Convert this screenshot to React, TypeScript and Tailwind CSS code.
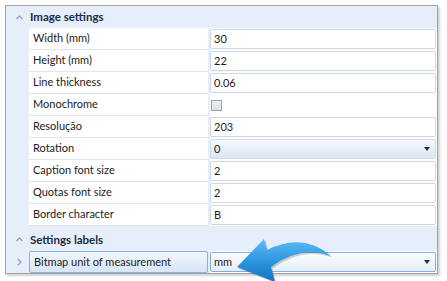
import React from "react";

interface Row {
  label: string;
  value?: string;
  kind?: "text" | "check" | "combo";
}

const rows: Row[] = [
  { label: "Width (mm)", value: "30" },
  { label: "Height (mm)", value: "22" },
  { label: "Line thickness", value: "0.06" },
  { label: "Monochrome", kind: "check" },
  { label: "Resolução", value: "203" },
  { label: "Rotation", value: "0", kind: "combo" },
  { label: "Caption font size", value: "2" },
  { label: "Quotas font size", value: "2" },
  { label: "Border character", value: "B" },
];

function ChevronUp() {
  return (
    <svg width="7" height="5" viewBox="0 0 7 5" className="block">
      <path d="M0.5 4 L3.5 1 L6.5 4" fill="none" stroke="#8d9db3" strokeWidth="1.2" />
    </svg>
  );
}

function DropTriangle() {
  return (
    <svg width="6" height="4" viewBox="0 0 6 4" className="block">
      <path d="M0 0 H6 L3 4 Z" fill="#1f2f4a" />
    </svg>
  );
}

function SectionHeader({ title, tall }: { title: string; tall?: boolean }) {
  return (
    <div
      className={`flex items-center bg-[#e6eefa] ${tall ? "h-[25px] pt-[2px]" : "h-[22px]"}`}
    >
      <div className="w-[23px] flex justify-center pl-[3px]">
        <ChevronUp />
      </div>
      <span className="font-bold text-[#1d2b44] text-[11.5px] pl-[1px]">{title}</span>
    </div>
  );
}

function ValueBox({ row, selected }: { row: Row; selected?: boolean }) {
  if (row.kind === "check") {
    return (
      <div className="h-full flex items-center pl-[1px]">
        <div className="w-[11px] h-[11px] border border-[#9aa3ad] bg-gradient-to-b from-[#eef0f2] to-[#dfe3e8]" />
      </div>
    );
  }
  if (row.kind === "combo") {
    return (
      <div
        className={`h-full rounded-[2px] border flex items-center justify-between pl-[3px] pr-[5px] bg-gradient-to-b ${
          selected
            ? "border-[#7eaee8] from-[#fbfdff] to-[#e4edf8]"
            : "border-[#cfdbe9] from-[#f4f8fd] to-[#dbe6f3]"
        }`}
      >
        <span>{row.value}</span>
        <DropTriangle />
      </div>
    );
  }
  return (
    <div className="h-full rounded-[2px] border border-[#cdd8e6] bg-white flex items-center pl-[3px]">
      {row.value}
    </div>
  );
}

function PropertyRow({ row, selected }: { row: Row; selected?: boolean }) {
  return (
    <div className="flex h-[22px]">
      <div className="w-[23px] bg-[#e6eefa] flex items-center justify-center pl-[3px]">
        {selected && (
          <svg width="5" height="8" viewBox="0 0 5 8" className="block">
            <path d="M0.8 0.8 L4 4 L0.8 7.2" fill="none" stroke="#8d9db3" strokeWidth="1.2" />
          </svg>
        )}
      </div>
      <div
        className={`w-[179px] flex items-center pl-[4px] ${
          selected
            ? "border border-[#86b0e2] bg-gradient-to-b from-[#f2f7fd] to-[#d6e5f7] rounded-[2px]"
            : "bg-white border-b border-[#dfe6ef]"
        }`}
      >
        {row.label}
      </div>
      <div className="w-[2px] bg-[#e6eefa]" />
      <div className="flex-1 bg-white py-[1px] pr-[1px]">
        <ValueBox row={row} selected={selected} />
      </div>
    </div>
  );
}

export default function App() {
  return (
    <div
      className="relative w-[447px] h-[281px] bg-white overflow-hidden text-[11px] text-[#1b1b1b]"
      style={{ fontFamily: 'Lato, "Open Sans", sans-serif' }}
    >
      <div className="ml-[5px] mt-[5px] w-[433px] border border-[#a2a2a2] bg-[#e6eefa] shadow-[2px_2px_2px_rgba(0,0,0,0.18)]">
        <SectionHeader title="Image settings" />
        {rows.map((r) => (
          <PropertyRow key={r.label} row={r} />
        ))}
        <SectionHeader title="Settings labels" tall />
        <PropertyRow
          row={{ label: "Bitmap unit of measurement", value: "mm", kind: "combo" }}
          selected
        />
      </div>

      <svg
        width="108"
        height="46"
        viewBox="0 0 108 46"
        className="absolute left-[229px] top-[236px]"
      >
        <defs>
          <linearGradient id="arrowFill" x1="0" y1="0" x2="0" y2="1">
            <stop offset="0" stopColor="#5cbcf2" />
            <stop offset="0.55" stopColor="#2a93dd" />
            <stop offset="1" stopColor="#1671c4" />
          </linearGradient>
        </defs>
        <path
          d="M8 31 L35 3 L38 14 Q74 -4 102 20 Q72 9 42 31 L46 46 Z"
          fill="rgba(0,0,0,0.18)"
          transform="translate(1.5 1.5)"
        />
        <path
          d="M8 31 L35 3 L38 14 Q74 -4 102 20 Q72 9 42 31 L46 46 Z"
          fill="url(#arrowFill)"
        />
      </svg>
    </div>
  );
}
